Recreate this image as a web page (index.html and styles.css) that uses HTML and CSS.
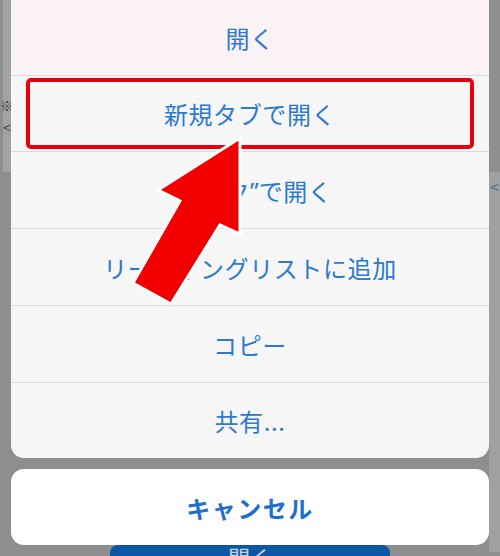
FILE: index.html
```html
<!doctype html>
<html lang="ja">
  <head>
    <meta charset="UTF-8" />
    <meta name="viewport" content="width=device-width, initial-scale=1.0" />
    <title>リンクを開く</title>
    <link rel="stylesheet" href="styles.css">
  </head>
  <body>
    <div class="screen">
      <div class="gutter gutter-left">
        <div class="page-strip">
          <span class="page-mark">※</span>
          <span class="page-mark">&lt;</span>
        </div>
      </div>

      <div class="sheet-column">
        <div class="action-sheet">
          <div class="action action-first">開く</div>
          <div class="action action-marked">
            <div class="highlight">新規タブで開く</div>
          </div>
          <div class="action"><span class="quote">“</span>ブック<span class="quote">”</span>で開く</div>
          <div class="action">リーディングリストに追加</div>
          <div class="action">コピー</div>
          <div class="action action-last">共有...</div>
        </div>
        <div class="cancel">キャンセル</div>
        <div class="page-button">開く</div>
      </div>

      <div class="gutter gutter-right">
        <div class="page-strip-right">
          <span class="page-chevron">&lt;</span>
        </div>
      </div>

      <!-- annotation arrow pointing at the highlighted row -->
      <svg class="arrow" width="500" height="556" viewBox="0 0 500 556">
        <polygon points="240,138 240,234 220,225 171,304 133,283 180,201 158,190"
                 fill="#f20000" stroke="#ffffff" stroke-width="3" stroke-linejoin="miter" />
      </svg>
    </div>
  </body>
</html>
```

FILE: styles.css
```css
body {
  margin: 0;
  background-color: #8e8e90;
  font-family: "Noto Sans CJK JP", "Noto Sans", sans-serif;
}
.screen {
  position: relative;
  width: 500px;
  height: 556px;
  overflow: hidden;
  display: grid;
  grid-template-columns: 11px 478px 11px;
  background-color: #8e8e90;
}
.gutter {
  display: flex;
  flex-direction: column;
}
.page-strip {
  margin-left: 3px;
  height: 172px;
  background-color: #a2a2a4;
  display: flex;
  flex-direction: column;
  align-items: center;
  padding-top: 94px;
  box-sizing: border-box;
}
.page-mark {
  font-size: 14px;
  line-height: 22px;
  color: #3c3c3e;
}
.page-strip-right {
  margin-top: 172px;
  height: 380px;
  background-color: #9fa0a2;
  display: flex;
  justify-content: center;
  padding-top: 3px;
  box-sizing: border-box;
}
.page-chevron {
  font-size: 16px;
  line-height: 22px;
  color: #3f7e90;
}
.sheet-column {
  display: flex;
  flex-direction: column;
  align-items: center;
}
.action-sheet {
  width: 100%;
  margin-top: -1px;
  background-color: #f6f6f7;
  border-radius: 0 0 13px 13px;
  overflow: hidden;
}
.action {
  height: 76px;
  border-bottom: 1px solid #dadadd;
  display: flex;
  justify-content: center;
  align-items: center;
  font-size: 24px;
  letter-spacing: 0.6px;
  color: #2c79cf;
}
.quote {
  font-family: "Noto Sans", sans-serif;
  letter-spacing: 0;
}
.action-first {
  background-color: #fbf2f5;
}
.action-last {
  height: 75px;
  border-bottom: none;
}
.action-marked {
  padding: 2px 15px;
  box-sizing: border-box;
  align-items: stretch;
}
.highlight {
  flex: 1;
  border: 4px solid #e8000c;
  border-radius: 5px;
  display: flex;
  justify-content: center;
  align-items: center;
}
.cancel {
  width: 100%;
  height: 76px;
  margin-top: 11px;
  background-color: #ffffff;
  border-radius: 13px;
  display: flex;
  justify-content: center;
  align-items: center;
  font-size: 24px;
  font-weight: bold;
  letter-spacing: 1.5px;
  color: #1f6fcf;
}
.page-button {
  width: 280px;
  height: 40px;
  background-color: #0c56a5;
  border-radius: 8px;
  text-align: center;
  font-size: 22px;
  line-height: 22px;
  color: #c6d0e0;
}
.arrow {
  position: absolute;
  top: 0;
  left: 0;
}
```
